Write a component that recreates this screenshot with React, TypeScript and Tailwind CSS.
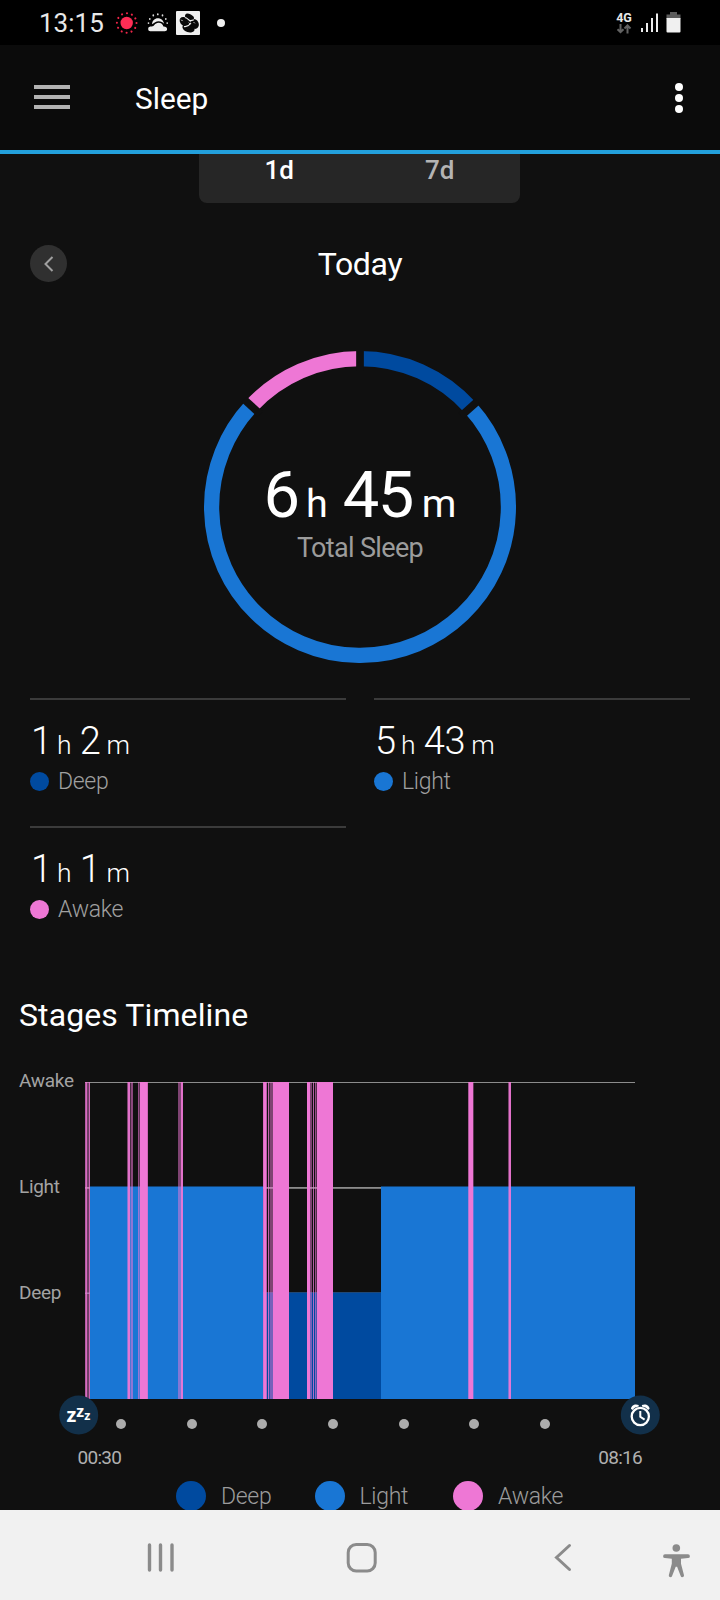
import React from "react";

const COLORS = {
  deep: "#004a9f",
  light: "#1976d4",
  awake: "#ee77d5",
};

const stats = [
  { hours: "1", minutes: "2", label: "Deep", color: COLORS.deep },
  { hours: "5", minutes: "43", label: "Light", color: COLORS.light },
  { hours: "1", minutes: "1", label: "Awake", color: COLORS.awake },
];

// [x, width, opacity] inside the 550px wide plot
const awakeBars = [
  [0, 1, 0.75],
  [1, 1, 0.9],
  [2, 2, 0.45],
  [4, 1, 0.85],
  [42, 1, 0.5],
  [43, 2, 0.95],
  [45, 1, 0.25],
  [46, 2, 0.55],
  [53, 1, 0.6],
  [54, 1, 0.35],
  [55, 7, 1],
  [62, 1, 0.85],
  [93, 3, 0.5],
  [96, 2, 0.95],
  [178, 1, 0.9],
  [179, 2, 1],
  [181, 1, 0.75],
  [183, 1, 0.8],
  [184, 1, 0.2],
  [185, 3, 0.5],
  [188, 16, 1],
  [222, 3, 1],
  [225, 2, 0.5],
  [228, 1, 0.75],
  [230, 1, 0.6],
  [231, 1, 0.3],
  [232, 16, 1],
  [383, 1, 0.7],
  [384, 4, 1],
  [388, 1, 0.35],
  [423, 1, 0.5],
  [424, 2, 0.95],
];

const arc = (from: number, to: number) => {
  const point = (deg: number) => {
    const rad = (deg * Math.PI) / 180;
    return `${156 + 148.4 * Math.sin(rad)} ${156 - 148.4 * Math.cos(rad)}`;
  };
  return `M${point(from)}A148.4 148.4 0 ${to - from > 180 ? 1 : 0} 1 ${point(to)}`;
};

const StatusBar = () => (
  <div className="flex h-[45px] items-center bg-black pl-[39px] text-[#e8e8e8]">
    <span className="w-[66px] pt-px text-[26px] leading-[45px]">13:15</span>
    <svg className="ml-[10px] h-6 w-6" viewBox="0 0 24 24">
      <circle cx="11.700" cy="12" r="6.200" fill="#ff2d55" />
      <circle
        cx="11.700"
        cy="12"
        r="9.800"
        fill="none"
        stroke="#ee2549"
        strokeWidth="2.100"
        strokeLinecap="round"
        strokeDasharray="0.01 5.121"
      />
    </svg>
    <svg className="ml-[8px] h-6 w-[22px]" viewBox="0 0 22 24" fill="#ececec">
      <path d="M3.500 20.200a2.300 2.300 0 0 1-.2-4.600c2.200-.1 2.600.1 4-1.500 1.200-1.400 2.400-2.300 4.200-2.300 2.700 0 4.300 1.700 4.900 3.700 2.300-.1 3.700.9 3.700 2.400 0 1.300-1 2.300-2.300 2.300z" />
      <path d="M5 13.300c.2-3.600 2.800-6 5.900-6 3.100 0 5.500 2.200 6.200 5.500-1.200-1.600-3-2.600-5.400-2.600-2.900 0-4.300 1.700-6.700 3.100z" />
      <g stroke="#dcdcdc" strokeWidth="1.700" strokeLinecap="round">
        <path d="M10.800 3v.4M15.500 4.200v.4M6.300 4.200v.4M2.800 7.800v.3M18.800 7.800v.3M1.500 12v.1M20.200 12v.1" />
      </g>
    </svg>
    <svg className="ml-[7px] h-6 w-6" viewBox="0 0 24 24">
      <rect width="24" height="24" rx="1" fill="#efefef" />
      <g fill="#080808">
        <ellipse cx="13.500" cy="6" rx="4.800" ry="2.800" transform="rotate(28 13.500 6)" />
        <ellipse cx="9" cy="11" rx="6" ry="4.200" transform="rotate(38 9 11)" />
        <ellipse cx="18.500" cy="13" rx="4.200" ry="5" transform="rotate(-25 18.500 13)" />
        <ellipse cx="12.500" cy="17.300" rx="6.300" ry="4" transform="rotate(18 12.500 17.300)" />
      </g>
      <path
        d="M9 6.800c2.500-.2 3 2.500 5.500 2.800 1.500.2 2.500-.5 3.500-.8M8 15.500c3 .8 4.500-.5 7-3.500"
        fill="none"
        stroke="#efefef"
        strokeWidth="1.100"
      />
      <path d="M18 11.500l.5.500M5.500 9l.8.800M13 12l.5.500" stroke="#efefef" strokeLinecap="round" />
    </svg>
    <span className="ml-[17px] h-2 w-2 rounded-full bg-[#f0f0f0]" />
    <div className="ml-auto flex items-center pr-[39px]">
      <div className="flex w-4 flex-col items-center">
        <span className="h-[12px] text-[12.5px] leading-[12px] font-bold">4G</span>
        <svg className="h-[10px] w-4" viewBox="0 0 16 10">
          <path
            d="M4.500 0v8M1.500 5.200l3 3 3-3M11.500 9.500v-8M8.500 4.500l3-3 3 3"
            fill="none"
            stroke="#626262"
            strokeWidth="2"
          />
        </svg>
      </div>
      <svg className="ml-2 h-5 w-5" viewBox="0 0 20 20" fill="#ededed">
        <rect x="1" y="15" width="2" height="4" />
        <rect x="6" y="10" width="2" height="9" />
        <rect x="11" y="5" width="2" height="14" />
        <rect x="16" y="0.500" width="2" height="18.500" />
      </svg>
      <svg className="ml-[6px] h-[21px] w-[15px]" viewBox="0 0 15 21">
        <path d="M4 0h7v2.500h3.500V7H.5V2.500H4z" fill="#5c5c5c" />
        <path d="M.5 6h14v13.500a1 1 0 0 1-1 1h-12a1 1 0 0 1-1-1z" fill="#f0f0f0" />
      </svg>
    </div>
  </div>
);

const Header = () => (
  <header className="flex h-[109px] items-center border-b-4 border-[#23a0dc] bg-[#0b0b0b] pl-[34px]">
    <div className="-mt-[2px] flex h-6 w-9 flex-col justify-between">
      <span className="h-1 bg-[#b3b3b3]" />
      <span className="h-1 bg-[#b3b3b3]" />
      <span className="h-1 bg-[#b3b3b3]" />
    </div>
    <h1 className="ml-[65px] pt-[3px] text-[29.8px] leading-[36px] text-white">Sleep</h1>
    <div className="mr-[37px] ml-auto flex h-[30px] flex-col justify-between">
      <span className="h-2 w-2 rounded-full bg-white" />
      <span className="h-2 w-2 rounded-full bg-white" />
      <span className="h-2 w-2 rounded-full bg-white" />
    </div>
  </header>
);

const SleepRing = () => (
  <div className="relative mx-auto mt-[69px] h-[312px] w-[312px]">
    <svg className="h-full w-full" viewBox="0 0 312 312" fill="none" strokeWidth="15.200">
      <path d={arc(0, 48)} stroke={COLORS.deep} />
      <path d={arc(48, 312.900)} stroke={COLORS.light} />
      <path d={arc(312.900, 360)} stroke={COLORS.awake} />
      {/* gaps between the stages */}
      {[0, 48, 312.900].map((deg) => (
        <path
          key={deg}
          d="M156 -2v22"
          transform={`rotate(${deg} 156 156)`}
          stroke="#101010"
          strokeWidth="7.700"
        />
      ))}
    </svg>
    <div className="absolute inset-0 flex flex-col items-center pt-[112px]">
      <div className="flex h-[66px] items-baseline leading-none text-white">
        <span className="text-[65px]">6</span>
        <span className="ml-[6px] text-[39.5px]">h</span>
        <span className="ml-[15px] text-[65px] tracking-[-1.5px]">45</span>
        <span className="ml-[9px] text-[39.5px]">m</span>
      </div>
      <span className="mt-[3px] text-[27px] leading-[32px] tracking-[-0.65px] text-[#9c9c9c]">
        Total Sleep
      </span>
    </div>
  </div>
);

const Stages = () => (
  <div className="mt-[35px] grid grid-cols-2 gap-x-7 px-[30px]">
    {stats.map((s) => (
      <div key={s.label} className="h-[128px] border-t-2 border-[#3b3b3b] pt-[22px]">
        <div className="flex h-[38px] items-baseline pl-px leading-none font-light text-white">
          <span className="text-[38px]">{s.hours}</span>
          <span className="ml-[5px] text-[26.5px]">h</span>
          <span className="ml-[8px] text-[38px] tracking-[-0.3px]">{s.minutes}</span>
          <span className="ml-[6px] text-[26.5px]">m</span>
        </div>
        <div className="mt-[8px] flex items-center">
          <span className="h-[19px] w-[19px] rounded-full" style={{ background: s.color }} />
          <span className="ml-[9px] pt-[2px] text-[23px] leading-[24px] font-light tracking-[-0.3px] text-[#a0a0a0]">
            {s.label}
          </span>
        </div>
      </div>
    ))}
  </div>
);

const Timeline = () => (
  <div className="mt-[47px] flex pl-[19px]">
    <div className="-mt-[11px] flex w-[66px] shrink-0 flex-col gap-[86px] text-[19px] leading-[20px] tracking-[-0.3px] text-[#a3a3a3]">
      <span>Awake</span>
      <span>Light</span>
      <span>Deep</span>
    </div>
    <svg className="h-[317px] w-[550px]" viewBox="0 0 550 317">
      <rect y="0" width="550" height="1" fill="#8c8c8c" />
      <rect y="105" width="550" height="1.800" fill="#8c8c8c" />
      <rect y="210.500" width="550" height="1.500" fill="#6f7c8c" />
      <rect x="5" y="104.500" width="173" height="212.500" fill={COLORS.light} />
      <rect x="178" y="210.500" width="118" height="106.500" fill={COLORS.deep} />
      <rect x="296" y="104.500" width="254" height="212.500" fill={COLORS.light} />
      {awakeBars.map(([x, width, opacity]) => (
        <rect key={x} x={x} y="0" width={width} height="317" fill={COLORS.awake} opacity={opacity} />
      ))}
    </svg>
  </div>
);

const TimeAxis = () => (
  <>
    <div className="relative -mt-[4px] flex h-[40px] items-center pl-[59px]">
      <svg className="h-10 w-10" viewBox="0 0 40 40">
        <circle cx="19.700" cy="20" r="19.500" fill="#12304a" />
        <g className="font-['Open_Sans',sans-serif] font-bold" fill="#fff">
          <text x="7.500" y="27.300" fontSize="20">z</text>
          <text x="17.300" y="22" fontSize="16">z</text>
          <text x="25.300" y="24.700" fontSize="12.500">z</text>
        </g>
      </svg>
      <div className="mt-[17px] ml-[17px] flex w-[434px] justify-between">
        {[1, 2, 3, 4, 5, 6, 7].map((h) => (
          <span key={h} className="h-[10px] w-[10px] rounded-full bg-[#acacac]" />
        ))}
      </div>
      <svg className="ml-[70px] h-10 w-10" viewBox="0 0 40 40" fill="none" stroke="#fff">
        <circle cx="20.300" cy="20" r="19.500" fill="#12304a" stroke="none" />
        <circle cx="20.300" cy="21.500" r="8.600" strokeWidth="2.300" />
        <path d="M20.300 16v5.800l4.300 2.900" strokeWidth="2" />
        <path
          d="M11 13.800c0-3.200 4.200-5.700 7.700-3.700v1.400c-2.700.3-4.800 1.500-6.200 3.600zM29.600 13.800c0-3.200-4.200-5.700-7.700-3.700v1.400c2.700.3 4.800 1.500 6.200 3.600z"
          fill="#fff"
          stroke="none"
        />
      </svg>
    </div>
    <div className="mt-[13px] flex justify-between pr-[78px] pl-[77.500px] text-[19px] leading-[20px] tracking-[-0.7px] text-[#b0b0b0]">
      <span>00:30</span>
      <span>08:16</span>
    </div>
    <div className="mt-[13px] flex pl-[176px]">
      {["Deep", "Light", "Awake"].map((label) => (
        <div key={label} className="flex h-[30px] w-[138.500px] items-center">
          <span
            className="h-[30px] w-[30px] shrink-0 rounded-full"
            style={{ background: stats.find((s) => s.label === label)?.color }}
          />
          <span className="ml-[15px] pt-[2px] text-[23px] leading-[30px] font-light tracking-[-0.3px] text-[#9c9c9c]">
            {label}
          </span>
        </div>
      ))}
    </div>
  </>
);

const NavBar = () => (
  <nav className="flex h-[90px] bg-[#f1f1f1]">
    <svg className="h-[90px] w-[720px]" viewBox="0 0 720 90" fill="none" stroke="#8b8b8b" strokeWidth="3">
      <path d="M149.500 35v25M160.500 35v25M172 35v25" strokeLinecap="round" strokeWidth="3.400" />
      <rect x="348.200" y="34.500" width="27" height="26.500" rx="8" />
      <path d="M569.500 35.500L556.500 47.500L569.500 59.500" strokeLinecap="round" />
      <circle cx="676.300" cy="38" r="3.800" fill="#8b8b8b" stroke="none" />
      <path
        d="M665 44.300h23a1.900 1.900 0 0 1 0 3.800l-7 .6v5l3 11.500a1.700 1.700 0 0 1-3.200 1l-3.700-9.500h-1.400l-3.700 9.500a1.700 1.700 0 0 1-3.200-1l3-11.500v-5l-6.800-.6a1.900 1.900 0 0 1 0-3.800z"
        fill="#8b8b8b"
        stroke="none"
      />
    </svg>
  </nav>
);

const App = () => {
  return (
    <div className="h-[1600px] w-[720px] overflow-hidden bg-[#101010] font-[Roboto,sans-serif]">
      <StatusBar />
      <Header />
      <main className="h-[1356px] overflow-hidden">
        <div className="ml-[199px] flex h-[49px] w-[321px] rounded-b-lg bg-[#262626] text-center text-[26px] leading-[32px] font-medium">
          <span className="flex-1 text-white">1d</span>
          <span className="flex-1 text-[#b4b4b4]">7d</span>
        </div>
        <div className="mt-[42px] grid h-[37px] grid-cols-[37px_1fr_37px] items-center px-[30px]">
          <button className="flex h-[37px] w-[37px] items-center justify-center rounded-full bg-[#303030]">
            <svg className="h-4 w-[10px]" viewBox="0 0 10 16" fill="none" stroke="#a0a0a0" strokeWidth="2">
              <path d="M8.500 1L1.500 8l7 7" />
            </svg>
          </button>
          <h2 className="text-center text-[32px] leading-[36px] tracking-[-0.3px] text-white">Today</h2>
        </div>
        <SleepRing />
        <Stages />
        <h2 className="mt-[41px] pl-[19px] text-[32px] leading-[40px] tracking-[0.1px] text-white">
          Stages Timeline
        </h2>
        <Timeline />
        <TimeAxis />
      </main>
      <NavBar />
    </div>
  );
};

export default App;
